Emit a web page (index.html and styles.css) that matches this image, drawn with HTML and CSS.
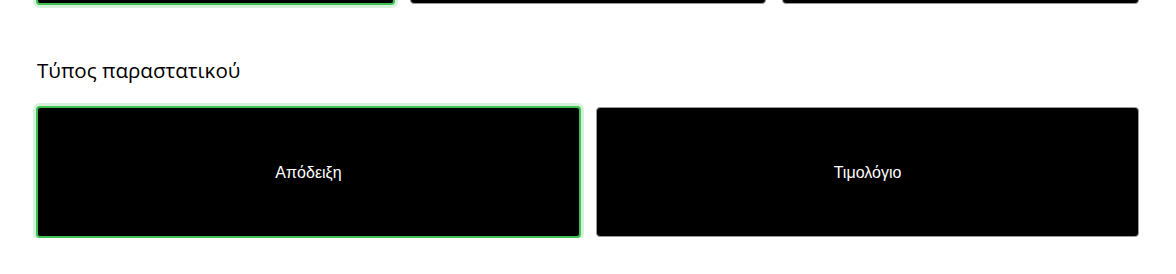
FILE: index.html
```html
<!DOCTYPE html>
<html lang="el">
<head>
    <meta charset="UTF-8">
    <meta name="viewport" content="width=device-width, initial-scale=1.0">
    <title>Παραστατικό</title>
    <link rel="stylesheet" href="styles.css">
</head>
<body>
    <div class="form">
        <div class="options options-3 options-cut">
            <button class="option selected">Μετρητά</button>
            <button class="option">Κάρτα</button>
            <button class="option">Άλλο</button>
        </div>

        <div class="field">
            <h3 class="field-title">Τύπος παραστατικού</h3>
            <div class="options options-2">
                <button class="option selected">Απόδειξη</button>
                <button class="option">Τιμολόγιο</button>
            </div>
        </div>
    </div>
</body>
</html>
```

FILE: styles.css
```css
* {
    margin: 0;
    padding: 0;
    box-sizing: border-box;
}

body {
    font-family: 'Liberation Sans', Arial, sans-serif;
    background-color: #fff;
    color: #000;
    overflow: hidden;
}

.form {
    padding: 0 37px;
}

.options {
    display: grid;
    gap: 16px;
    align-items: center;
}

.options-3 {
    grid-template-columns: repeat(3, 1fr);
}

.options-2 {
    grid-template-columns: repeat(2, 1fr);
}

/* top row is scrolled mostly out of view */
.options-cut {
    margin-top: -127px;
}

.option {
    height: 130px;
    background-color: #000;
    color: #fff;
    border: 1px solid #9a9a9a;
    border-radius: 4px;
    font-family: 'Liberation Sans', Arial, sans-serif;
    font-size: 16px;
    padding-top: 2px;
    cursor: pointer;
}

.option.selected {
    height: 132px;
    margin: 0 -1px;
    border: 2px solid #3fc152;
    box-shadow: 0 0 0 3px rgba(63, 193, 82, 0.22);
}

.field {
    margin-top: 52px;
}

.field-title {
    font-family: 'Open Sans', sans-serif;
    font-size: 20.6px;
    font-weight: normal;
    line-height: 26px;
    margin-bottom: 23px;
}
```
